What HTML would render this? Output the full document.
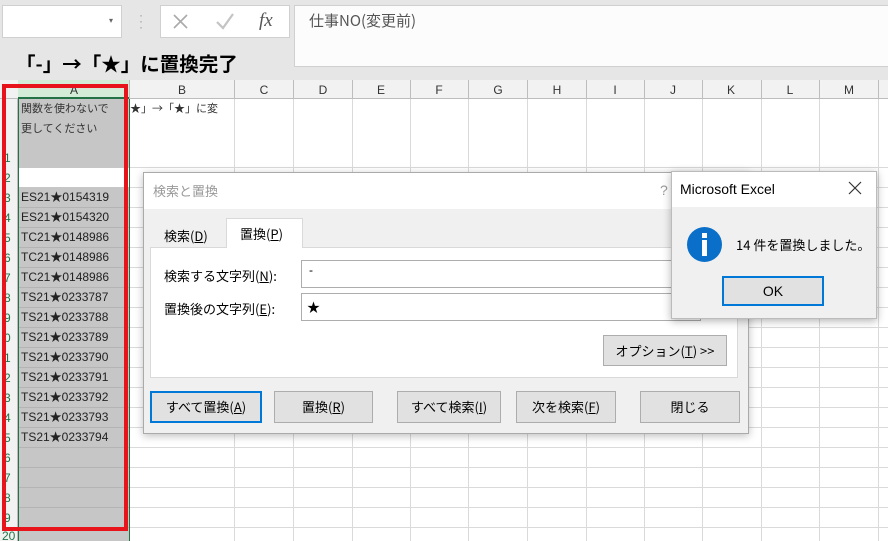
<!DOCTYPE html>
<html><head><meta charset="utf-8"><style>
*{box-sizing:border-box;margin:0;padding:0}
body{width:888px;height:541px;overflow:hidden;position:relative;background:#fff;font-family:"Liberation Sans","Noto Sans CJK JP",sans-serif;}
.a{position:absolute}
.jp{font-family:"Noto Sans CJK JP","Liberation Sans",sans-serif}
.btn{position:absolute;background:#e1e1e1;border:1px solid #adadad;font-size:13px;color:#000;text-align:center;font-family:"Noto Sans CJK JP",sans-serif}
u{text-decoration:underline}
</style></head><body>
<div class="a" style="left:0;top:0;width:888px;height:80px;background:#e6e6e6"></div>
<div class="a" style="left:2px;top:5px;width:120px;height:33px;background:#fff;border:1px solid #d0d0d0"></div>
<div class="a" style="left:109px;top:16px;font-size:8px;color:#666">▾</div>
<div class="a" style="left:139px;top:12px;font-size:12px;color:#999;line-height:6px">·<br>·<br>·</div>
<div class="a" style="left:160px;top:5px;width:130px;height:33px;background:#fff;border:1px solid #d0d0d0"></div>
<svg class="a" style="left:160px;top:5px" width="130" height="33">
<path d="M14 10 L27 23 M27 10 L14 23" stroke="#aaa" stroke-width="1.6" fill="none"/>
<path d="M57 17 L63 23 L73 9" stroke="#c4c4c4" stroke-width="2.2" fill="none"/>
</svg>
<div class="a" style="left:259px;top:10px;font-size:19px;font-style:italic;font-family:'Liberation Serif',serif;color:#555">fx</div>
<div class="a" style="left:294px;top:5px;width:600px;height:62px;background:#fcfcfc;border:1px solid #d0d0d0"></div>
<div class="a jp" style="left:309px;top:10px;font-size:15px;color:#555">仕事NO(変更前)</div>
<div class="a jp" style="left:16px;top:48px;font-size:19.5px;font-weight:bold;color:#000">「-」→「★」に置換完了</div>
<div class="a" style="left:0;top:80px;width:888px;height:19px;background:#f2f2f2;border-bottom:1px solid #bdbdbd"></div>
<div class="a" style="left:18px;top:80px;width:111px;height:19px;background:#d3ecd8;border-bottom:2px solid #217346"></div>
<div class="a" style="left:0;top:99px;width:18px;height:442px;background:#f2f2f2;border-right:1px solid #bdbdbd"></div>
<svg class="a" style="left:0;top:0" width="888" height="541">
<g stroke="#dadada" stroke-width="1">
<line x1="234.5" y1="99" x2="234.5" y2="541"/><line x1="293.5" y1="99" x2="293.5" y2="541"/>
<line x1="352.5" y1="99" x2="352.5" y2="541"/><line x1="410.5" y1="99" x2="410.5" y2="541"/>
<line x1="468.5" y1="99" x2="468.5" y2="541"/><line x1="527.5" y1="99" x2="527.5" y2="541"/>
<line x1="586.5" y1="99" x2="586.5" y2="541"/><line x1="644.5" y1="99" x2="644.5" y2="541"/>
<line x1="702.5" y1="99" x2="702.5" y2="541"/><line x1="761.5" y1="99" x2="761.5" y2="541"/>
<line x1="819.5" y1="99" x2="819.5" y2="541"/><line x1="878.5" y1="99" x2="878.5" y2="541"/>
<line x1="129" y1="167.5" x2="888" y2="167.5"/><line x1="129" y1="187.5" x2="888" y2="187.5"/>
<line x1="129" y1="207.5" x2="888" y2="207.5"/><line x1="129" y1="227.5" x2="888" y2="227.5"/>
<line x1="129" y1="247.5" x2="888" y2="247.5"/><line x1="129" y1="267.5" x2="888" y2="267.5"/>
<line x1="129" y1="287.5" x2="888" y2="287.5"/><line x1="129" y1="307.5" x2="888" y2="307.5"/>
<line x1="129" y1="327.5" x2="888" y2="327.5"/><line x1="129" y1="347.5" x2="888" y2="347.5"/>
<line x1="129" y1="367.5" x2="888" y2="367.5"/><line x1="129" y1="387.5" x2="888" y2="387.5"/>
<line x1="129" y1="407.5" x2="888" y2="407.5"/><line x1="129" y1="427.5" x2="888" y2="427.5"/>
<line x1="129" y1="447.5" x2="888" y2="447.5"/><line x1="129" y1="467.5" x2="888" y2="467.5"/>
<line x1="129" y1="487.5" x2="888" y2="487.5"/><line x1="129" y1="507.5" x2="888" y2="507.5"/>
<line x1="129" y1="527.5" x2="888" y2="527.5"/>
</g>
<g stroke="#bdbdbd"><line x1="129.5" y1="80" x2="129.5" y2="99"/><line x1="234.5" y1="80" x2="234.5" y2="99"/><line x1="293.5" y1="80" x2="293.5" y2="99"/><line x1="352.5" y1="80" x2="352.5" y2="99"/><line x1="410.5" y1="80" x2="410.5" y2="99"/><line x1="468.5" y1="80" x2="468.5" y2="99"/><line x1="527.5" y1="80" x2="527.5" y2="99"/><line x1="586.5" y1="80" x2="586.5" y2="99"/><line x1="644.5" y1="80" x2="644.5" y2="99"/><line x1="702.5" y1="80" x2="702.5" y2="99"/><line x1="761.5" y1="80" x2="761.5" y2="99"/><line x1="819.5" y1="80" x2="819.5" y2="99"/><line x1="878.5" y1="80" x2="878.5" y2="99"/></g>
<g font-family="Liberation Sans" font-size="12" fill="#333" text-anchor="middle">
<text x="74" y="94">A</text><text x="182" y="94">B</text><text x="264" y="94">C</text><text x="323" y="94">D</text><text x="381" y="94">E</text><text x="439" y="94">F</text><text x="498" y="94">G</text><text x="557" y="94">H</text><text x="615" y="94">I</text><text x="673" y="94">J</text><text x="731" y="94">K</text><text x="790" y="94">L</text><text x="849" y="94">M</text>
</g>
<rect x="18" y="99" width="111" height="69" fill="#c6c6c6"/>
<rect x="18" y="168" width="111" height="19" fill="#fff"/>
<rect x="18" y="187" width="111" height="354" fill="#c6c6c6"/>
<g stroke="#b4b4b4"><line x1="18" y1="207.5" x2="129" y2="207.5"/><line x1="18" y1="227.5" x2="129" y2="227.5"/><line x1="18" y1="247.5" x2="129" y2="247.5"/><line x1="18" y1="267.5" x2="129" y2="267.5"/><line x1="18" y1="287.5" x2="129" y2="287.5"/><line x1="18" y1="307.5" x2="129" y2="307.5"/><line x1="18" y1="327.5" x2="129" y2="327.5"/><line x1="18" y1="347.5" x2="129" y2="347.5"/><line x1="18" y1="367.5" x2="129" y2="367.5"/><line x1="18" y1="387.5" x2="129" y2="387.5"/><line x1="18" y1="407.5" x2="129" y2="407.5"/><line x1="18" y1="427.5" x2="129" y2="427.5"/><line x1="18" y1="447.5" x2="129" y2="447.5"/><line x1="18" y1="467.5" x2="129" y2="467.5"/><line x1="18" y1="487.5" x2="129" y2="487.5"/><line x1="18" y1="507.5" x2="129" y2="507.5"/><line x1="18" y1="527.5" x2="129" y2="527.5"/></g>
<line x1="18.5" y1="99" x2="18.5" y2="541" stroke="#217346"/><line x1="129.5" y1="99" x2="129.5" y2="541" stroke="#217346"/>
<g font-family="Liberation Sans" font-size="12" fill="#217346">
<text x="4" y="162">1</text><text x="4" y="182">2</text><text x="4" y="202">3</text><text x="4" y="222">4</text><text x="4" y="242">5</text><text x="4" y="262">6</text><text x="4" y="282">7</text><text x="4" y="302">8</text><text x="4" y="322">9</text><text x="4" y="342">0</text><text x="4" y="362">1</text><text x="4" y="382">2</text><text x="4" y="402">3</text><text x="4" y="422">4</text><text x="4" y="442">5</text><text x="4" y="462">6</text><text x="4" y="482">7</text><text x="4" y="502">8</text><text x="4" y="522">9</text><text x="2" y="540">20</text>
</g>
<g font-family="Liberation Sans,Noto Sans CJK JP" font-size="12" fill="#222">
<text x="21" y="201">ES21★0154319</text><text x="21" y="221">ES21★0154320</text><text x="21" y="241">TC21★0148986</text><text x="21" y="261">TC21★0148986</text><text x="21" y="281">TC21★0148986</text><text x="21" y="301">TS21★0233787</text><text x="21" y="321">TS21★0233788</text><text x="21" y="341">TS21★0233789</text><text x="21" y="361">TS21★0233790</text><text x="21" y="381">TS21★0233791</text><text x="21" y="401">TS21★0233792</text><text x="21" y="421">TS21★0233793</text><text x="21" y="441">TS21★0233794</text>
</g>
<g font-family="Noto Sans CJK JP" font-size="11" fill="#333">
<text x="21" y="112">関数を使わないで</text><text x="21" y="132">更してください</text>
<text x="130" y="112">★」→「★」に変</text>
</g>
<rect x="4" y="86" width="122" height="443" fill="none" stroke="#e8141c" stroke-width="4"/>
</svg>

<div class="a" style="left:143px;top:172px;width:606px;height:262px;background:#f0f0f0;border:1px solid #aaa;box-shadow:0 2px 8px rgba(0,0,0,.25)"></div>
<div class="a" style="left:144px;top:173px;width:604px;height:36px;background:#fff"></div>
<div class="a jp" style="left:153px;top:181px;font-size:13px;color:#999">検索と置換</div>
<div class="a" style="left:660px;top:182px;font-size:14px;color:#999">?</div>
<div class="a" style="left:150px;top:247px;width:588px;height:131px;background:#fff;border:1px solid #d9d9d9"></div>
<div class="a jp" style="left:164px;top:226px;font-size:13px">検索(<u>D</u>)</div>
<div class="a" style="left:226px;top:218px;width:77px;height:30px;background:#fff;border:1px solid #d9d9d9;border-bottom:none"></div>
<div class="a jp" style="left:240px;top:224px;font-size:13px">置換(<u>P</u>)</div>
<div class="a jp" style="left:164px;top:266px;font-size:13px">検索する文字列(<u>N</u>):</div>
<div class="a jp" style="left:164px;top:299px;font-size:13px">置換後の文字列(<u>E</u>):</div>
<div class="a" style="left:301px;top:260px;width:400px;height:28px;background:#fff;border:1px solid #adadad"></div>
<div class="a" style="left:301px;top:293px;width:400px;height:28px;background:#fff;border:1px solid #adadad"></div>
<div class="a" style="left:309px;top:263px;font-size:12px">-</div>
<div class="a jp" style="left:307px;top:297px;font-size:13px">★</div>
<div class="btn" style="left:603px;top:335px;width:124px;height:31px;line-height:29px">オプション(<u>T</u>) &gt;&gt;</div>
<div class="btn" style="left:150px;top:391px;width:112px;height:32px;line-height:28px;border:2px solid #0078d7">すべて置換(<u>A</u>)</div>
<div class="btn" style="left:274px;top:391px;width:99px;height:32px;line-height:30px">置換(<u>R</u>)</div>
<div class="btn" style="left:397px;top:391px;width:104px;height:32px;line-height:30px">すべて検索(<u>I</u>)</div>
<div class="btn" style="left:516px;top:391px;width:100px;height:32px;line-height:30px">次を検索(<u>F</u>)</div>
<div class="btn" style="left:640px;top:391px;width:100px;height:32px;line-height:30px">閉じる</div>

<div class="a" style="left:671px;top:171px;width:206px;height:148px;background:#f0f0f0;border:1px solid #bbb;box-shadow:0 2px 8px rgba(0,0,0,.3)"></div>
<div class="a" style="left:672px;top:172px;width:204px;height:35px;background:#fff"></div>
<div class="a" style="left:680px;top:181px;font-size:14px;color:#000">Microsoft Excel</div>
<svg class="a" style="left:848px;top:181px" width="14" height="14"><path d="M1 1 L13 13 M13 1 L1 13" stroke="#333" stroke-width="1.2"/></svg>
<div class="a" style="left:687px;top:227px;width:35px;height:35px;border-radius:50%;background:#0a6fc9"></div>
<div class="a" style="left:702px;top:233px;width:5px;height:5px;background:#fff"></div>
<div class="a" style="left:702px;top:240px;width:5px;height:16px;background:#fff"></div>
<div class="a jp" style="left:736px;top:235px;font-size:13px">14 件を置換しました。</div>
<div class="a" style="left:722px;top:276px;width:102px;height:30px;background:#e1e1e1;border:2px solid #0078d7;text-align:center;line-height:26px;font-size:14px">OK</div>
</body></html>
